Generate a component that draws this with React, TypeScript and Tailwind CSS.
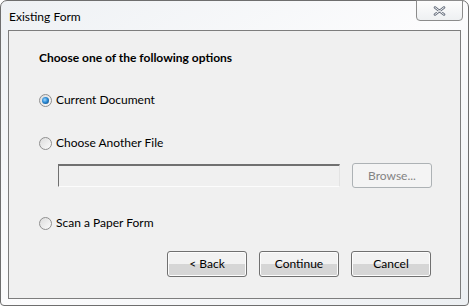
import React from 'react';

const font = { fontFamily: '"Segoe UI", Lato, "Noto Sans", sans-serif' };

function Radio({ checked }: { checked?: boolean }) {
    return (
        <span className="relative inline-flex h-[13px] w-[13px] shrink-0 items-center justify-center rounded-full border border-[#8f8f8f] bg-gradient-to-br from-[#dcdcdc] to-[#fbfbfb]">
            {checked && (
                <span className="h-[7px] w-[7px] rounded-full bg-[radial-gradient(circle_at_40%_40%,#9fd6ff_0%,#2a8ad4_45%,#0d3a6b_100%)]" />
            )}
        </span>
    );
}

function Btn({ children, disabled }: { children: React.ReactNode; disabled?: boolean }) {
    return (
        <button
            className={
                disabled
                    ? 'flex h-[25px] w-[80px] items-center justify-center rounded-[3px] border border-[#adb2b5] bg-[#f4f4f4] text-[12px] leading-[16px] text-[#838383]'
                    : 'flex h-[26px] w-[80px] items-center justify-center rounded-[3px] border border-[#707070] bg-gradient-to-b from-[#f2f2f2] from-50% to-[#d6d6d6] to-50% text-[12px] leading-[16px] text-black shadow-[inset_0_0_0_1px_#fcfcfc]'
            }
        >
            {children}
        </button>
    );
}

export default function App() {
    return (
        <div className="h-[306px] w-[470px] bg-white" style={font}>
            <div className="relative flex h-[306px] w-[469px] flex-col rounded-t-[7px] rounded-b-[4px] border border-[#6e6e6e] bg-gradient-to-br from-[#eef1f4] via-[#fcfcfd] to-[#eceff2]">
                {/* Title bar */}
                <div className="flex h-[29px] items-center pl-[8px] pt-[2px] text-[12px] leading-[16px] text-black">Existing Form</div>
                <div className="absolute right-[5px] top-[-1px] flex h-[21px] w-[47px] items-center justify-center rounded-b-[4px] border border-[#8c8c8c] bg-gradient-to-b from-[#fdfdfd] to-[#eef0f2]">
                    <svg width="13" height="10" viewBox="0 0 13 10">
                        <path d="M2 1.5 L11 8.5 M11 1.5 L2 8.5" stroke="#6a7280" strokeWidth="2.6" strokeLinecap="round" />
                        <path d="M2 1.5 L11 8.5 M11 1.5 L2 8.5" stroke="#ffffff" strokeWidth="0.9" strokeLinecap="round" />
                    </svg>
                </div>

                {/* Client area */}
                <div className="mx-[7px] flex h-[269px] flex-col border border-[#7d7d7d] bg-[#f0f0f0] pl-[30px] pt-[19px] text-[12px] leading-[16px] text-black">
                    <div className="font-bold">Choose one of the following options</div>

                    <label className="mt-[26px] flex items-center gap-[4px]">
                        <Radio checked />
                        <span>Current Document</span>
                    </label>

                    <label className="mt-[27px] flex items-center gap-[4px]">
                        <Radio />
                        <span>Choose Another File</span>
                    </label>

                    <div className="mt-[12px] flex items-center gap-[12px] pl-[19px]">
                        <div className="h-[23px] w-[282px] border-t-2 border-l border-b border-r border-t-[#707070] border-l-[#707070] border-b-[#fcfcfc] border-r-[#e3e3e3] bg-[#f0f0f0]" />
                        <Btn disabled>Browse...</Btn>
                    </div>

                    <label className="mt-[27px] flex items-center gap-[4px]">
                        <Radio />
                        <span>Scan a Paper Form</span>
                    </label>

                    <div className="mt-[20px] flex gap-[12px] pl-[128px]">
                        <Btn>&lt; Back</Btn>
                        <Btn>Continue</Btn>
                        <Btn>Cancel</Btn>
                    </div>
                </div>
            </div>
        </div>
    );
}
